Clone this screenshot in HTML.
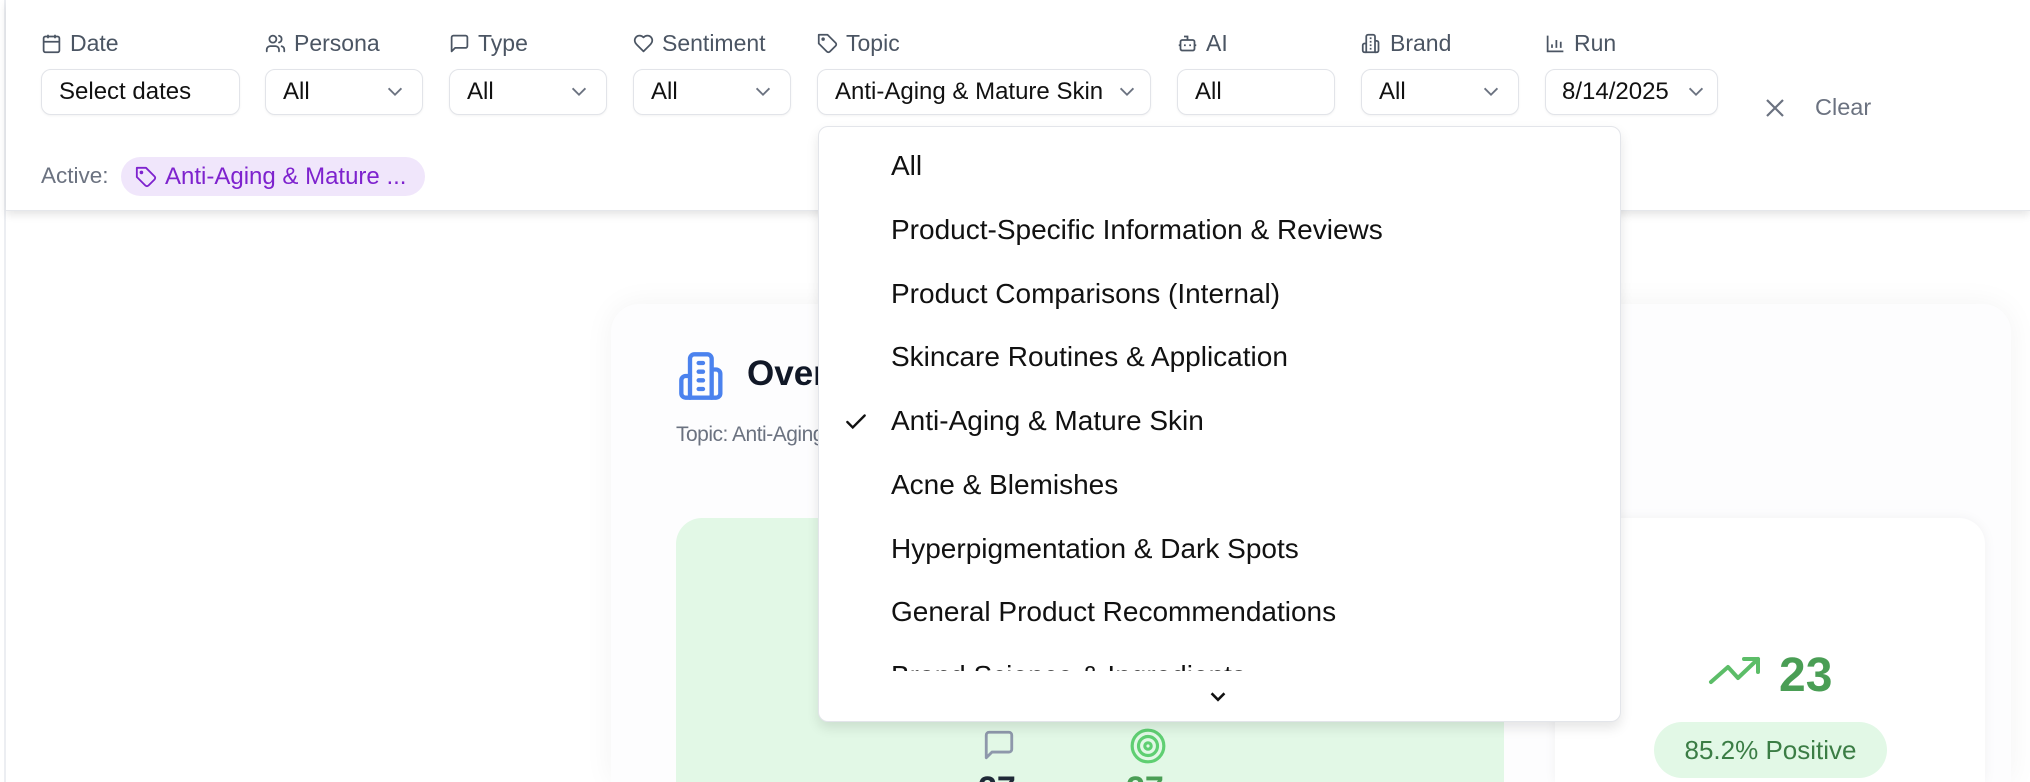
<!DOCTYPE html>
<html><head><meta charset="utf-8"><style>
*{box-sizing:border-box;margin:0;padding:0}
html,body{width:2030px;height:782px;overflow:hidden}
body{background:#fff;font-family:"Liberation Sans",Arial,sans-serif;position:relative}
.abs{position:absolute}
.lbl{position:absolute;top:30px;font-size:23px;color:#4b5563;display:flex;align-items:center;gap:8px}
.lbl svg{width:21px;height:21px}
.box{position:absolute;top:69px;height:46px;border:1.5px solid #e2e4e9;border-radius:10px;background:#fff;font-size:24px;color:#111;display:flex;align-items:center;padding-left:17px;box-shadow:0 1px 2px rgba(0,0,0,.05)}
.chev{position:absolute;right:16px;top:11px;width:22px;height:22px}
.item{position:absolute;font-size:28px;color:#111;white-space:nowrap}
</style></head><body>
<div class="abs" style="left:4px;top:0;width:2px;height:782px;background:#eceef2"></div>
<div class="abs" style="left:6px;top:0;width:2024px;height:211px;background:#fff;box-shadow:0 4px 8px rgba(0,0,0,.10);border-bottom:1px solid #e5e7eb"></div>

<div class="abs" style="left:611px;top:304px;width:1400px;height:478px;background:#fdfdfe;border-radius:28px 28px 0 0;box-shadow:0 0 30px rgba(0,0,0,.05)"></div>
<svg class="abs" style="left:677px;top:350px" width="52" height="52" viewBox="0 0 24 24" fill="none" stroke="#4b82ee" stroke-width="2" stroke-linecap="round" stroke-linejoin="round"><path d="M6 22V4a2 2 0 0 1 2-2h6a2 2 0 0 1 2 2v18Z"/><path d="M6 12H4a2 2 0 0 0-2 2v6a2 2 0 0 0 2 2h2"/><path d="M16 9h2a2 2 0 0 1 2 2v9a2 2 0 0 1-2 2h-2"/><path d="M10 6h2M10 10h2M10 14h2M10 18h2"/></svg>
<div class="abs" style="left:747px;top:354px;font-size:35px;font-weight:bold;color:#111827">Overview</div>
<div class="abs" style="left:676px;top:423px;font-size:21px;color:#6b7280;letter-spacing:-0.5px">Topic: Anti-Aging &amp; Mature Skin</div>
<div class="abs" style="left:676px;top:518px;width:828px;height:264px;background:#e2f8e6;border-radius:26px 26px 0 0"></div>
<svg class="abs" style="left:982px;top:728px" width="34" height="34" viewBox="0 0 24 24" fill="none" stroke="#8e98ab" stroke-width="2" stroke-linejoin="round"><path d="M21 15a2 2 0 0 1-2 2H7l-4 4V5a2 2 0 0 1 2-2h14a2 2 0 0 1 2 2z"/></svg>
<svg class="abs" style="left:1129px;top:727px" width="38" height="38" viewBox="0 0 24 24" fill="none" stroke="#5fcf72" stroke-width="2"><circle cx="12" cy="12" r="10"/><circle cx="12" cy="12" r="6"/><circle cx="12" cy="12" r="2"/></svg>
<div class="abs" style="left:978px;top:770px;font-size:34px;font-weight:bold;color:#1f2937">27</div>
<div class="abs" style="left:1126px;top:770px;font-size:34px;font-weight:bold;color:#4a9e55">27</div>
<div class="abs" style="left:1555px;top:518px;width:430px;height:264px;background:#fff;border-radius:26px 26px 0 0;box-shadow:0 0 12px rgba(0,0,0,.05)"></div>
<svg class="abs" style="left:1708px;top:655px" width="56" height="36" viewBox="0 0 56 36" fill="none" stroke="#5cbd68" stroke-width="4" stroke-linecap="round" stroke-linejoin="round"><path d="M3 27 L20 12 L30 23 L50 4"/><path d="M36 4 H50 V17"/></svg>
<div class="abs" style="left:1779px;top:648px;font-size:48px;font-weight:bold;color:#4a9e55">23</div>
<div class="abs" style="left:1654px;top:722px;width:233px;height:56px;border-radius:28px;background:#e2f8e6;color:#3b7d45;font-size:26px;display:flex;align-items:center;justify-content:center">85.2% Positive</div>

<div class="lbl" style="left:41px"><svg viewBox="0 0 24 24" fill="none" stroke="#4b5563" stroke-width="2"><rect x="3" y="4" width="18" height="18" rx="2"/><path d="M16 2v4M8 2v4M3 10h18"/></svg>Date</div>
<div class="lbl" style="left:265px"><svg viewBox="0 0 24 24" fill="none" stroke="#4b5563" stroke-width="2" stroke-linecap="round"><path d="M16 21v-2a4 4 0 0 0-4-4H6a4 4 0 0 0-4 4v2"/><circle cx="9" cy="7" r="4"/><path d="M22 21v-2a4 4 0 0 0-3-3.87M16 3.13a4 4 0 0 1 0 7.75"/></svg>Persona</div>
<div class="lbl" style="left:449px"><svg viewBox="0 0 24 24" fill="none" stroke="#4b5563" stroke-width="2" stroke-linejoin="round"><path d="M21 15a2 2 0 0 1-2 2H7l-4 4V5a2 2 0 0 1 2-2h14a2 2 0 0 1 2 2z"/></svg>Type</div>
<div class="lbl" style="left:633px"><svg viewBox="0 0 24 24" fill="none" stroke="#4b5563" stroke-width="2" stroke-linejoin="round"><path d="M19 14c1.5-1.5 3-3.2 3-5.5A5.5 5.5 0 0 0 16.5 3c-1.8 0-3 .5-4.5 2-1.5-1.5-2.7-2-4.5-2A5.5 5.5 0 0 0 2 8.5c0 2.3 1.5 4 3 5.5l7 7Z"/></svg>Sentiment</div>
<div class="lbl" style="left:817px"><svg viewBox="0 0 24 24" fill="none" stroke="#4b5563" stroke-width="2" stroke-linejoin="round"><path d="M12 2H2v10l9.3 9.3a2.4 2.4 0 0 0 3.4 0l6.6-6.6a2.4 2.4 0 0 0 0-3.4Z"/><circle cx="7" cy="7" r="1"/></svg>Topic</div>
<div class="lbl" style="left:1177px"><svg viewBox="0 0 24 24" fill="none" stroke="#4b5563" stroke-width="2"><path d="M12 8V4H8"/><rect x="4" y="8" width="16" height="12" rx="2"/><path d="M2 14h2M20 14h2M15 13v2M9 13v2"/></svg>AI</div>
<div class="lbl" style="left:1361px"><svg viewBox="0 0 24 24" fill="none" stroke="#4b5563" stroke-width="2"><path d="M6 22V4a2 2 0 0 1 2-2h6a2 2 0 0 1 2 2v18Z"/><path d="M6 12H4a2 2 0 0 0-2 2v6a2 2 0 0 0 2 2h2M16 9h2a2 2 0 0 1 2 2v9a2 2 0 0 1-2 2h-2M10 6h2M10 10h2M10 14h2M10 18h2"/></svg>Brand</div>
<div class="lbl" style="left:1545px"><svg viewBox="0 0 24 24" fill="none" stroke="#4b5563" stroke-width="2"><path d="M3 3v18h18M8 17v-4M13 17V8M18 17v-7"/></svg>Run</div>

<div class="box" style="left:41px;width:199px">Select dates</div>
<div class="box" style="left:265px;width:158px">All<svg class="chev" viewBox="0 0 24 24" fill="none" stroke="#6b7280" stroke-width="2"><path d="M5 8l7 7 7-7"/></svg></div>
<div class="box" style="left:449px;width:158px">All<svg class="chev" viewBox="0 0 24 24" fill="none" stroke="#6b7280" stroke-width="2"><path d="M5 8l7 7 7-7"/></svg></div>
<div class="box" style="left:633px;width:158px">All<svg class="chev" viewBox="0 0 24 24" fill="none" stroke="#6b7280" stroke-width="2"><path d="M5 8l7 7 7-7"/></svg></div>
<div class="box" style="left:817px;width:334px">Anti-Aging &amp; Mature Skin<svg class="chev" style="right:12px" viewBox="0 0 24 24" fill="none" stroke="#6b7280" stroke-width="2"><path d="M5 8l7 7 7-7"/></svg></div>
<div class="box" style="left:1177px;width:158px">All</div>
<div class="box" style="left:1361px;width:158px">All<svg class="chev" viewBox="0 0 24 24" fill="none" stroke="#6b7280" stroke-width="2"><path d="M5 8l7 7 7-7"/></svg></div>
<div class="box" style="left:1545px;width:173px;padding-left:16px">8/14/2025<svg class="chev" style="right:10px" viewBox="0 0 24 24" fill="none" stroke="#6b7280" stroke-width="2"><path d="M5 8l7 7 7-7"/></svg></div>
<svg class="abs" style="left:1763px;top:96px" width="24" height="24" viewBox="0 0 24 24" fill="none" stroke="#6b7280" stroke-width="2.2"><path d="M4 4l16 16M20 4L4 20"/></svg>
<div class="abs" style="left:1815px;top:94px;font-size:23.5px;color:#6b7280">Clear</div>

<div class="abs" style="left:41px;top:163px;font-size:22.5px;color:#6b7280">Active:</div>
<div class="abs" style="left:121px;top:157px;width:304px;height:39px;border-radius:20px;background:#f0e6fb;color:#7e22ce;font-size:24px;display:flex;align-items:center;padding-left:14px;gap:8px;white-space:nowrap"><svg width="22" height="22" viewBox="0 0 24 24" fill="none" stroke="#7e22ce" stroke-width="2" stroke-linejoin="round"><path d="M12 2H2v10l9.3 9.3a2.4 2.4 0 0 0 3.4 0l6.6-6.6a2.4 2.4 0 0 0 0-3.4Z"/><circle cx="7" cy="7" r="1"/></svg>Anti-Aging &amp; Mature ...</div>

<div class="abs" style="left:818px;top:126px;width:803px;height:596px;background:#fff;border:1.5px solid #e3e5ea;border-radius:10px;box-shadow:0 6px 12px rgba(0,0,0,.10)"></div>
<div class="abs" style="left:818px;top:130px;width:803px;height:541px;overflow:hidden">
<div class="item" style="left:73px;top:20px">All</div>
<div class="item" style="left:73px;top:84px">Product-Specific Information &amp; Reviews</div>
<div class="item" style="left:73px;top:148px">Product Comparisons (Internal)</div>
<div class="item" style="left:73px;top:211px">Skincare Routines &amp; Application</div>
<div class="item" style="left:73px;top:275px">Anti-Aging &amp; Mature Skin</div>
<div class="item" style="left:73px;top:339px">Acne &amp; Blemishes</div>
<div class="item" style="left:73px;top:403px">Hyperpigmentation &amp; Dark Spots</div>
<div class="item" style="left:73px;top:466px">General Product Recommendations</div>
<div class="item" style="left:73px;top:530px">Brand Science &amp; Ingredients</div>
</div>
<svg class="abs" style="left:843px;top:409px" width="26" height="26" viewBox="0 0 24 24" fill="none" stroke="#111" stroke-width="2.2" stroke-linecap="round"><path d="M4 12l5 5L20 6"/></svg>
<svg class="abs" style="left:1207px;top:686px" width="22" height="22" viewBox="0 0 24 24" fill="none" stroke="#111" stroke-width="2.8"><path d="M5 8l7 7 7-7"/></svg>
</body></html>
